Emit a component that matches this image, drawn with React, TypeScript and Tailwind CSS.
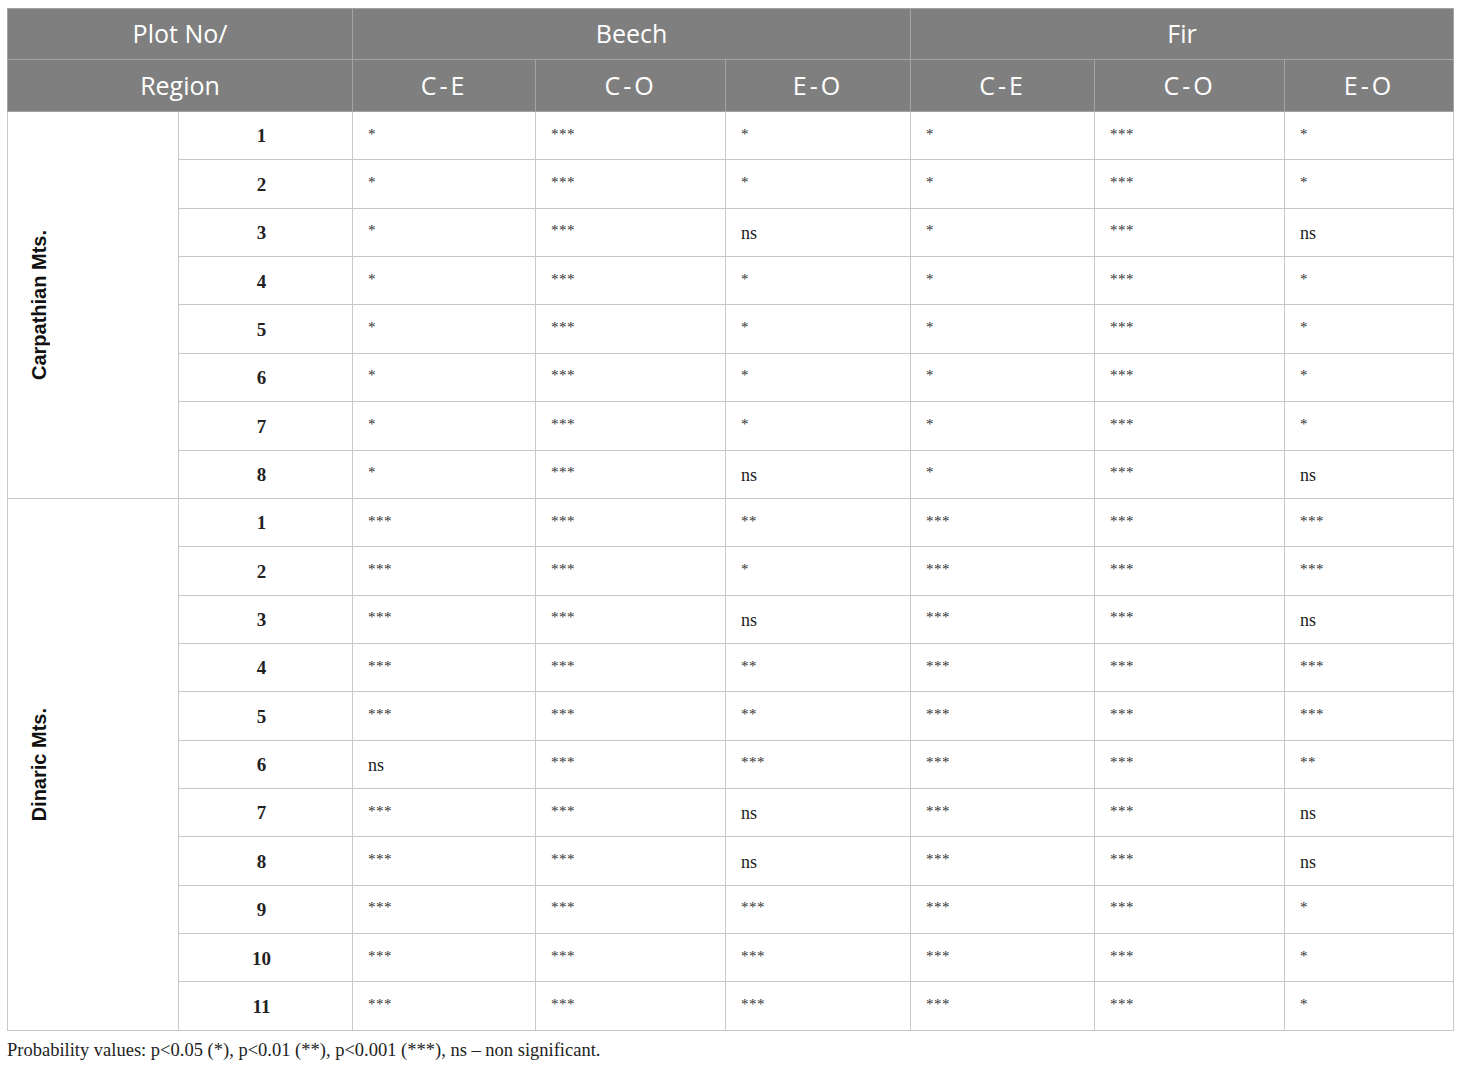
const CARP: string[][] = [
  ["*", "***", "*", "*", "***", "*"],
  ["*", "***", "*", "*", "***", "*"],
  ["*", "***", "ns", "*", "***", "ns"],
  ["*", "***", "*", "*", "***", "*"],
  ["*", "***", "*", "*", "***", "*"],
  ["*", "***", "*", "*", "***", "*"],
  ["*", "***", "*", "*", "***", "*"],
  ["*", "***", "ns", "*", "***", "ns"],
];

const DIN: string[][] = [
  ["***", "***", "**", "***", "***", "***"],
  ["***", "***", "*", "***", "***", "***"],
  ["***", "***", "ns", "***", "***", "ns"],
  ["***", "***", "**", "***", "***", "***"],
  ["***", "***", "**", "***", "***", "***"],
  ["ns", "***", "***", "***", "***", "**"],
  ["***", "***", "ns", "***", "***", "ns"],
  ["***", "***", "ns", "***", "***", "ns"],
  ["***", "***", "***", "***", "***", "*"],
  ["***", "***", "***", "***", "***", "*"],
  ["***", "***", "***", "***", "***", "*"],
];

const serif = "font-['Liberation_Serif',serif]";
const headFont = "font-['Open_Sans','Lato',sans-serif]";

function ValueCell({ v }: { v: string }) {
  const isStar = v.includes("*");
  return (
    <td className="border border-[#c8c8c8] px-[15px] text-left align-middle">
      {isStar ? (
        <span className="relative top-[-2px] text-[15px] tracking-[0.5px] text-[#333]">{v}</span>
      ) : (
        <span className="relative top-[1px] text-[18px] text-[#222]">{v}</span>
      )}
    </td>
  );
}

function RegionBlock({ name, rows }: { name: string; rows: string[][] }) {
  return (
    <>
      {rows.map((r, i) => (
        <tr key={i} className="h-[48.37px]">
          {i === 0 && (
            <td rowSpan={rows.length} className="border border-[#c8c8c8] align-middle">
              <div className="flex items-center justify-start pl-[17px]">
                <span className="[writing-mode:vertical-rl] rotate-180 font-['Liberation_Sans',Arial,sans-serif] text-[20px] leading-[28px] font-bold text-[#111] whitespace-nowrap">
                  {name}
                </span>
              </div>
            </td>
          )}
          <td className="border border-[#c8c8c8] pr-[8px] text-center align-middle">
            <span className="relative top-[1px] text-[19px] font-bold text-[#222]">{i + 1}</span>
          </td>
          {r.map((v, j) => (
            <ValueCell key={j} v={v} />
          ))}
        </tr>
      ))}
    </>
  );
}

export default function App() {
  const th = "border border-[#a3a3a3] font-normal";
  const sub = "border border-[#a3a3a3] font-normal tracking-[3px]";
  return (
    <div className={`min-h-screen bg-white pt-[8px] pl-[7px] ${serif}`}>
      <table className="w-[1446px] table-fixed border-collapse">
        <colgroup>
          <col className="w-[171px]" />
          <col className="w-[174px]" />
          <col className="w-[183px]" />
          <col className="w-[190px]" />
          <col className="w-[185px]" />
          <col className="w-[184px]" />
          <col className="w-[190px]" />
          <col className="w-[169px]" />
        </colgroup>
        <thead className={`${headFont} text-[25px] font-normal text-white`}>
          <tr className="h-[51px] bg-[#7f7f7f]">
            <th colSpan={2} className={th}>Plot No/</th>
            <th colSpan={3} className={th}>Beech</th>
            <th colSpan={3} className={th}>Fir</th>
          </tr>
          <tr className="h-[52px] bg-[#7f7f7f]">
            <th colSpan={2} className={th}>Region</th>
            <th className={sub}>C-E</th>
            <th className={sub}>C-O</th>
            <th className={sub}>E-O</th>
            <th className={sub}>C-E</th>
            <th className={sub}>C-O</th>
            <th className={sub}>E-O</th>
          </tr>
        </thead>
        <tbody>
          <RegionBlock name="Carpathian Mts." rows={CARP} />
          <RegionBlock name="Dinaric Mts." rows={DIN} />
        </tbody>
      </table>
      <p className="mt-[6px] text-[18.5px] text-[#222]">
        Probability values: p&lt;0.05 (*), p&lt;0.01 (**), p&lt;0.001 (***), ns – non significant.
      </p>
    </div>
  );
}
